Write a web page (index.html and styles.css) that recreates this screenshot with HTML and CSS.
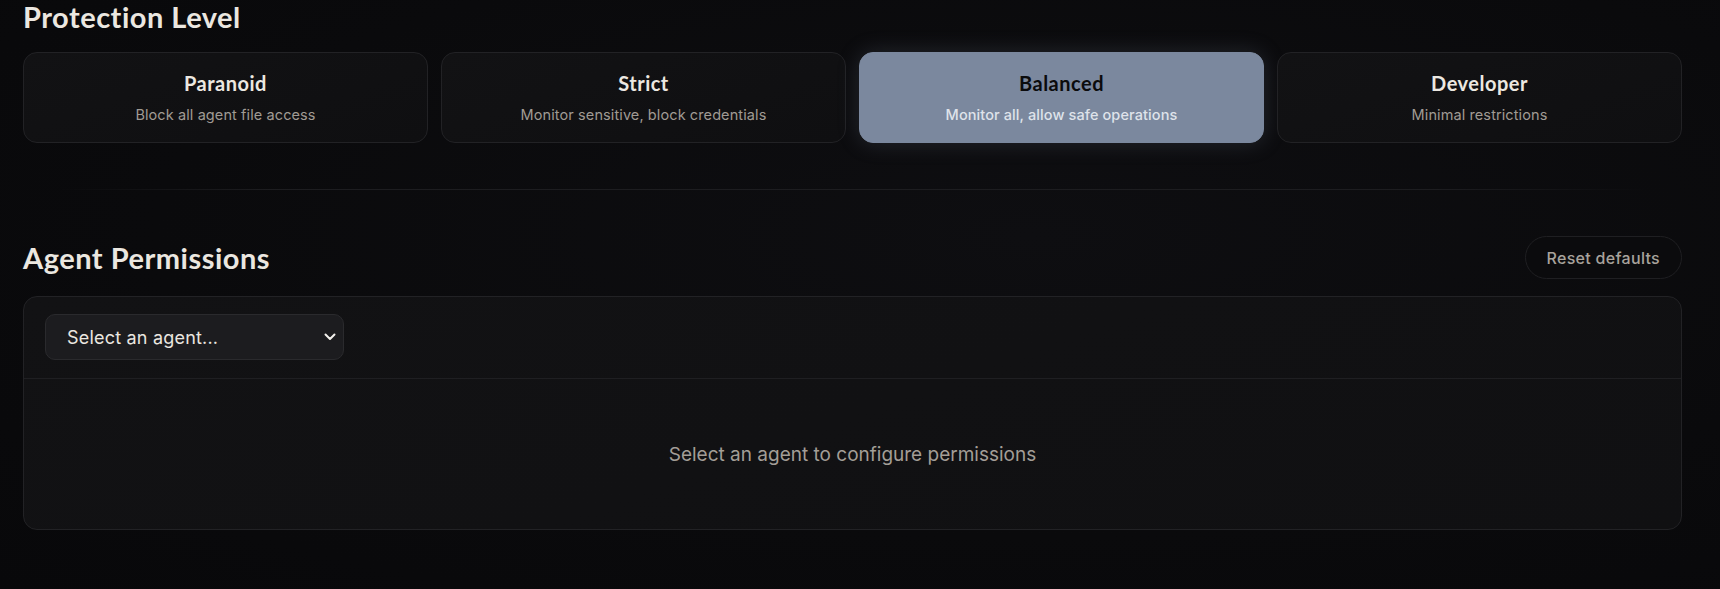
FILE: index.html
```html
<!DOCTYPE html>
<html lang="en">
<head>
<meta charset="utf-8">
<title>Protection</title>
<link rel="stylesheet" href="styles.css">
</head>
<body>
<main class="page">
  <h2 class="section-title">Protection Level</h2>
  <div class="levels">
    <button class="level">
      <span class="level-name">Paranoid</span>
      <span class="level-desc">Block all agent file access</span>
    </button>
    <button class="level">
      <span class="level-name">Strict</span>
      <span class="level-desc">Monitor sensitive, block credentials</span>
    </button>
    <button class="level level-active">
      <span class="level-name">Balanced</span>
      <span class="level-desc">Monitor all, allow safe operations</span>
    </button>
    <button class="level">
      <span class="level-name">Developer</span>
      <span class="level-desc">Minimal restrictions</span>
    </button>
  </div>

  <div class="divider"></div>

  <div class="perm-header">
    <h2 class="section-title">Agent Permissions</h2>
    <button class="reset-btn">Reset defaults</button>
  </div>

  <section class="panel">
    <div class="panel-toolbar">
      <div class="select">
        <span class="select-text">Select an agent...</span>
        <svg class="chevron" width="14" height="14" viewBox="0 0 14 14" aria-hidden="true">
          <polyline points="2.5,4.5 7,9 11.5,4.5" fill="none" stroke="#f2f0ec" stroke-width="2" stroke-linecap="round" stroke-linejoin="round"/>
        </svg>
      </div>
    </div>
    <div class="panel-empty">Select an agent to configure permissions</div>
  </section>
</main>
</body>
</html>
```

FILE: styles.css
```css
* { box-sizing: border-box; }

html, body {
  margin: 0;
  padding: 0;
}

body {
  background: #0a0a0c;
  background-image: radial-gradient(ellipse at 60% 40%, #0e0e11 0%, #0a0a0c 60%, #08080a 100%);
  min-height: 589px;
  font-family: Inter, "Noto Sans", sans-serif;
  color: #ebe7e0;
}

.page {
  padding: 0 38px 0 23px;
}

.section-title {
  margin: 0;
  font-family: Lato, "Noto Sans", sans-serif;
  font-weight: 700;
  font-size: 29px;
  line-height: 34px;
  letter-spacing: 0.5px;
  color: #ebe7e0;
}

.levels {
  margin-top: 18px;
  display: grid;
  grid-template-columns: repeat(4, 1fr);
  gap: 13px;
}

.level {
  display: flex;
  flex-direction: column;
  align-items: center;
  padding: 18px 16px 17px;
  background: linear-gradient(160deg, #121214 0%, #0f0f11 100%);
  border: 1px solid #222225;
  border-radius: 14px;
  font: inherit;
  cursor: pointer;
}

.level-name {
  font-family: Lato, "Noto Sans", sans-serif;
  font-weight: 700;
  font-size: 20px;
  line-height: 24px;
  letter-spacing: 0.5px;
  color: #ece8e1;
}

.level-desc {
  margin-top: 10px;
  font-size: 14.5px;
  line-height: 20px;
  letter-spacing: 0.1px;
  color: #a09b94;
}

.level-active {
  background: #7b889e;
  border-color: #7b889e;
  box-shadow: 0 0 22px rgba(123, 136, 158, 0.22);
}

.level-active .level-name {
  color: #0b0b0c;
  font-weight: 700;
}

.level-active .level-desc {
  color: #dfe3ea;
  font-weight: 500;
}

.divider {
  height: 1px;
  margin: 46px 0;
  background: linear-gradient(90deg, rgba(40, 40, 44, 0) 2%, #1d1d20 15%, #1d1d20 85%, rgba(40, 40, 44, 0) 98%);
}

.perm-header {
  display: flex;
  align-items: center;
  justify-content: space-between;
}

.reset-btn {
  height: 43px;
  padding: 0 21px;
  background: #0b0b0d;
  border: 1px solid #1f1f22;
  border-radius: 22px;
  font-family: Inter, "Noto Sans", sans-serif;
  font-size: 16px;
  font-weight: 500;
  letter-spacing: 0.3px;
  color: #a8a39c;
  cursor: pointer;
}

.panel {
  margin-top: 17px;
  background: linear-gradient(160deg, #121214 0%, #101012 100%);
  border: 1px solid #222225;
  border-radius: 14px;
}

.panel-toolbar {
  padding: 17px 20px 18px 21px;
  border-bottom: 1px solid #1f1f22;
}

.select {
  width: 299px;
  height: 46px;
  display: flex;
  align-items: center;
  justify-content: space-between;
  padding: 0 6px 0 21px;
  background: #1c1c1f;
  border: 1px solid #2a2a2d;
  border-radius: 10px;
}

.select-text {
  font-size: 18px;
  letter-spacing: 0.2px;
  color: #ebe7e0;
}

.panel-empty {
  height: 150px;
  display: flex;
  align-items: center;
  justify-content: center;
  font-size: 19px;
  color: #a39e97;
}
```
